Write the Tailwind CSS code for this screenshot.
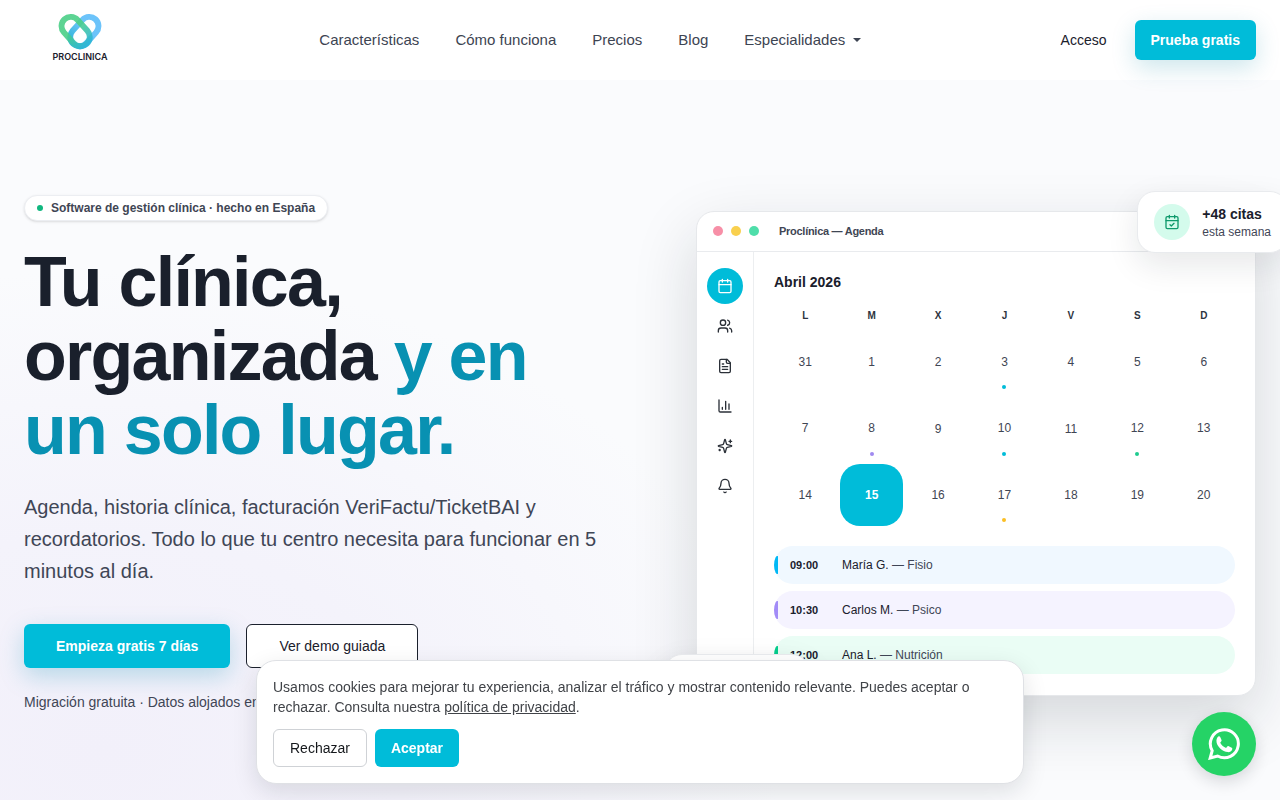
<!DOCTYPE html>
<html lang="es">

<head>
    <meta charset="UTF-8">
    <meta name="viewport" content="width=device-width, initial-scale=1.0">
    <title>Proclínica - Software de gestión clínica</title>
    <script src="https://cdn.jsdelivr.net/npm/@tailwindcss/browser@4"></script>
</head>

<body class="min-h-screen overflow-x-hidden bg-[#fafbfd] font-['Liberation_Sans',Arial,sans-serif] text-[#1a202c]">

    <!-- header -->
    <header class="relative z-10 bg-white">
        <div class="max-w-7xl mx-auto h-20 px-6 flex items-center justify-between">
            <a href="#" class="w-28 pb-1 flex flex-col items-center gap-0.5">
                <svg class="w-[46px] h-9" viewBox="1 3 46 37" fill="none" stroke-width="6">
                    <defs>
                        <linearGradient id="green" x1="0" y1="0" x2="1" y2="0">
                            <stop offset="0.4" stop-color="#4bcf87" />
                            <stop offset="1" stop-color="#2fb6d6" />
                        </linearGradient>
                        <linearGradient id="blue" x1="0" y1="0" x2="1" y2="0">
                            <stop offset="0.4" stop-color="#6cc3fa" />
                            <stop offset="1" stop-color="#2fb6d6" />
                        </linearGradient>
                    </defs>
                    <rect x="-9.5" y="-9.5" width="34" height="19" rx="9.5" stroke="url(#blue)" transform="translate(33.5 15.5) rotate(132)" />
                    <rect x="-9.5" y="-9.5" width="34" height="19" rx="9.5" stroke="url(#green)" stroke-opacity="0.9" transform="translate(14.5 15.5) rotate(48)" />
                </svg>
                <span class="font-['Inter',sans-serif] text-[9px] leading-[10px] font-semibold">PROCLINICA</span>
            </a>

            <nav class="flex items-center gap-9 text-[15px] text-[#3d4452]">
                <a href="#caracteristicas">Características</a>
                <a href="#como-funciona">Cómo funciona</a>
                <a href="#precios">Precios</a>
                <a href="#blog">Blog</a>
                <button class="flex items-center gap-2">Especialidades
                    <svg class="w-2 h-1" viewBox="0 0 8 4" fill="currentColor"><path d="M0 0h8L4 4z" /></svg>
                </button>
            </nav>

            <div class="flex items-center gap-3">
                <a href="#acceso" class="px-4 text-sm">Acceso</a>
                <a href="#prueba"
                    class="h-10 px-4 flex items-center rounded-md bg-[#00bcd9] text-white text-sm font-bold shadow-[0_8px_24px_rgba(0,130,160,0.2)]">Prueba gratis</a>
            </div>
        </div>
    </header>

    <!-- hero -->
    <main class="min-h-[720px] overflow-hidden bg-[radial-gradient(680px_480px_at_8%_92%,#f2f0fa_0%,#f4f3fb_45%,#fafbfd_100%)]">
        <div class="max-w-7xl mx-auto px-6 pt-[115px] pb-24 grid grid-cols-2 gap-16 items-center">

            <div>
                <p class="inline-flex items-center gap-2 h-[26px] px-3 rounded-full border border-[#eceef2] bg-white text-xs font-bold text-[#3f4654] shadow-sm align-top">
                    <span class="w-1.5 h-1.5 rounded-full bg-[#10b77f]"></span>Software de gestión clínica · hecho en España
                </p>
                <h1 class="mt-6 text-[70px] leading-[74px] font-bold tracking-tight whitespace-nowrap">
                    Tu clínica,<br>organizada <span class="text-[#0891b2]">y en<br>un solo lugar.</span>
                </h1>
                <p class="mt-6 text-xl leading-[32px] text-[#3f4656]">
                    Agenda, historia clínica, facturación VeriFactu/TicketBAI y recordatorios. Todo lo que tu centro
                    necesita para funcionar en 5 minutos al día.
                </p>
                <div class="mt-[37px] flex gap-4">
                    <a href="#prueba"
                        class="h-11 px-8 flex items-center rounded-md bg-[#00bcd9] text-white text-sm font-bold shadow-[0_8px_24px_rgba(0,140,180,0.25)]">Empieza gratis 7 días</a>
                    <a href="#demo"
                        class="h-11 px-8 flex items-center rounded-md border border-[#1a202c] bg-white text-sm">Ver demo guiada</a>
                </div>
                <p class="mt-6 text-sm text-[#3f4656]">Migración gratuita · Datos alojados en</p>
            </div>

            <!-- agenda -->
            <div class="relative w-full max-w-[560px] ml-auto">
                <div class="rounded-[18px] border border-[#e6e8eb] bg-white shadow-[0_24px_64px_rgba(20,28,36,0.16)]">
                    <div class="h-10 px-4 flex items-center gap-2 border-b border-[#e9ebee]">
                        <span class="w-2.5 h-2.5 rounded-full bg-[#f78fa7]"></span>
                        <span class="w-2.5 h-2.5 rounded-full bg-[#f9d04e]"></span>
                        <span class="w-2.5 h-2.5 rounded-full bg-[#4fdeaa]"></span>
                        <span class="ml-3 text-[11px] leading-4 font-bold tracking-tight text-[#3f4654]">Proclínica — Agenda</span>
                    </div>

                    <div class="flex">
                        <div class="w-[57px] py-4 flex flex-col items-center gap-1 border-r border-[#eceef0] text-[#2b3038]">
                            <button class="w-9 h-9 rounded-full bg-[#00bcd9] text-white flex items-center justify-center" aria-label="Agenda">
                                <svg class="w-4 h-4" viewBox="0 0 24 24" fill="none" stroke="currentColor" stroke-width="2" stroke-linecap="round" stroke-linejoin="round"><path d="M8 2v4M16 2v4M3 10h18" /><rect x="3" y="4" width="18" height="18" rx="2" /></svg>
                            </button>
                            <button class="w-9 h-9 flex items-center justify-center" aria-label="Pacientes">
                                <svg class="w-4 h-4" viewBox="0 0 24 24" fill="none" stroke="currentColor" stroke-width="2" stroke-linecap="round" stroke-linejoin="round"><path d="M16 21v-2a4 4 0 0 0-4-4H6a4 4 0 0 0-4 4v2" /><circle cx="9" cy="7" r="4" /><path d="M22 21v-2a4 4 0 0 0-3-3.87M16 3.13a4 4 0 0 1 0 7.75" /></svg>
                            </button>
                            <button class="w-9 h-9 flex items-center justify-center" aria-label="Historias">
                                <svg class="w-4 h-4" viewBox="0 0 24 24" fill="none" stroke="currentColor" stroke-width="2" stroke-linecap="round" stroke-linejoin="round"><path d="M15 2H6a2 2 0 0 0-2 2v16a2 2 0 0 0 2 2h12a2 2 0 0 0 2-2V7z" /><path d="M14 2v4a2 2 0 0 0 2 2h4M10 9H8M16 13H8M16 17H8" /></svg>
                            </button>
                            <button class="w-9 h-9 flex items-center justify-center" aria-label="Informes">
                                <svg class="w-4 h-4" viewBox="0 0 24 24" fill="none" stroke="currentColor" stroke-width="2" stroke-linecap="round" stroke-linejoin="round"><path d="M3 3v16a2 2 0 0 0 2 2h16M18 17V9M13 17V5M8 17v-3" /></svg>
                            </button>
                            <button class="w-9 h-9 flex items-center justify-center" aria-label="Asistente">
                                <svg class="w-4 h-4" viewBox="0 0 24 24" fill="none" stroke="currentColor" stroke-width="2" stroke-linecap="round" stroke-linejoin="round"><path d="M9.937 15.5A2 2 0 0 0 8.5 14.063l-6.135-1.582a.5.5 0 0 1 0-.962L8.5 9.936A2 2 0 0 0 9.937 8.5l1.582-6.135a.5.5 0 0 1 .963 0L14.063 8.5A2 2 0 0 0 15.5 9.937l6.135 1.581a.5.5 0 0 1 0 .964L15.5 14.063a2 2 0 0 0-1.437 1.437l-1.582 6.135a.5.5 0 0 1-.963 0z" /><path d="M20 3v4M22 5h-4M4 17v2M5 18H3" /></svg>
                            </button>
                            <button class="w-9 h-9 flex items-center justify-center" aria-label="Avisos">
                                <svg class="w-4 h-4" viewBox="0 0 24 24" fill="none" stroke="currentColor" stroke-width="2" stroke-linecap="round" stroke-linejoin="round"><path d="M10.268 21a2 2 0 0 0 3.464 0M3.262 15.326A1 1 0 0 0 4 17h16a1 1 0 0 0 .74-1.673C19.41 13.956 18 12.499 18 8A6 6 0 0 0 6 8c0 4.499-1.411 5.956-2.738 7.326" /></svg>
                            </button>
                        </div>

                        <div class="flex-1 p-5 pb-[21px]">
                            <h2 class="text-sm font-bold">Abril 2026</h2>
                            <div class="mt-4 grid grid-cols-7 gap-1 text-center text-[10px] leading-[15px] font-bold text-[#2d3440]">
                                <span>L</span><span>M</span><span>X</span><span>J</span><span>V</span><span>S</span><span>D</span>
                            </div>
                            <div class="mt-2 grid grid-cols-7 gap-1 text-xs text-[#3f4654] *:relative *:aspect-square *:flex *:items-center *:justify-center">
                                <div>31</div>
                                <div>1</div>
                                <div>2</div>
                                <div>3<span class="absolute bottom-1 w-1 h-1 rounded-full bg-[#00bcd9]"></span></div>
                                <div>4</div>
                                <div>5</div>
                                <div>6</div>
                                <div>7</div>
                                <div>8<span class="absolute bottom-1 w-1 h-1 rounded-full bg-[#a08af0]"></span></div>
                                <div>9</div>
                                <div>10<span class="absolute bottom-1 w-1 h-1 rounded-full bg-[#00bcd9]"></span></div>
                                <div>11</div>
                                <div>12<span class="absolute bottom-1 w-1 h-1 rounded-full bg-[#1fcb8f]"></span></div>
                                <div>13</div>
                                <div>14</div>
                                <div class="rounded-[20px] bg-[#00bcd9] text-white font-bold">15</div>
                                <div>16</div>
                                <div>17<span class="absolute bottom-1 w-1 h-1 rounded-full bg-[#fbbf24]"></span></div>
                                <div>18</div>
                                <div>19</div>
                                <div>20</div>
                            </div>

                            <div class="mt-5 flex flex-col gap-[7px] text-xs">
                                <div class="relative overflow-hidden h-[38px] px-4 flex items-center gap-3 rounded-full bg-[#f0f8ff]">
                                    <span class="absolute left-0 inset-y-2.5 w-1 rounded-l-full bg-[#00b8f5]"></span>
                                    <span class="w-10 text-[11px] font-bold">09:00</span>
                                    <p>María G. <span class="text-[#3f4656]">— Fisio</span></p>
                                </div>
                                <div class="relative overflow-hidden h-[38px] px-4 flex items-center gap-3 rounded-full bg-[#f5f3ff]">
                                    <span class="absolute left-0 inset-y-2.5 w-1 rounded-l-full bg-[#a28bf7]"></span>
                                    <span class="w-10 text-[11px] font-bold">10:30</span>
                                    <p>Carlos M. <span class="text-[#3f4656]">— Psico</span></p>
                                </div>
                                <div class="relative overflow-hidden h-[38px] px-4 flex items-center gap-3 rounded-full bg-[#eafdf5]">
                                    <span class="absolute left-0 inset-y-2.5 w-1 rounded-l-full bg-[#06cf8e]"></span>
                                    <span class="w-10 text-[11px] font-bold">12:00</span>
                                    <p>Ana L. <span class="text-[#3f4656]">— Nutrición</span></p>
                                </div>
                            </div>
                        </div>
                    </div>
                </div>

                <!-- tarjetas flotantes -->
                <div class="absolute -top-5 -right-8 px-4 py-3 flex items-center gap-3 rounded-[18px] border border-[#e9ebee] bg-white whitespace-nowrap shadow-[0_12px_32px_rgba(20,28,36,0.1)]">
                    <span class="w-9 h-9 rounded-full bg-[#d4fbec] text-[#0f9a6c] flex items-center justify-center">
                        <svg class="w-4 h-4" viewBox="0 0 24 24" fill="none" stroke="currentColor" stroke-width="2" stroke-linecap="round" stroke-linejoin="round"><path d="M8 2v4M16 2v4M3 10h18M9 16l2 2 4-4" /><rect x="3" y="4" width="18" height="18" rx="2" /></svg>
                    </span>
                    <div>
                        <p class="text-sm leading-5 font-bold">+48 citas</p>
                        <p class="text-xs leading-4 text-[#3f4656]">esta semana</p>
                    </div>
                </div>
                <div class="absolute -bottom-5 -left-8 w-[146px] h-[62px] rounded-[18px] border border-[#e9ebee] bg-white shadow-[0_12px_32px_rgba(20,28,36,0.1)]"></div>
            </div>
        </div>
    </main>

    <!-- cookies -->
    <div class="fixed z-20 bottom-4 inset-x-4 max-w-3xl mx-auto p-4 rounded-[20px] border border-[#dfe1e5] bg-white text-sm shadow-[0_8px_24px_rgba(20,28,36,0.12)]">
        <p class="text-[#404348]">
            Usamos cookies para mejorar tu experiencia, analizar el tráfico y mostrar contenido relevante. Puedes
            aceptar o rechazar. Consulta nuestra <a href="#privacidad" class="underline">política de privacidad</a>.
        </p>
        <div class="mt-3 flex gap-2">
            <button class="h-[38px] px-4 rounded-md border border-[#cfd2d6] bg-white text-[#15181c]">Rechazar</button>
            <button class="h-[38px] px-4 rounded-md bg-[#00bcd9] text-white font-bold">Aceptar</button>
        </div>
    </div>

    <!-- whatsapp -->
    <a href="#whatsapp" aria-label="WhatsApp"
        class="fixed z-20 bottom-6 right-6 w-16 h-16 rounded-full bg-[#25d366] flex items-center justify-center shadow-[0_6px_16px_rgba(20,28,36,0.15)]">
        <svg class="w-8 h-8" viewBox="0 0 32 32" fill="none">
            <path d="M2.2 30l2-7.3A14 14 0 1 1 9.6 28z" stroke="#fff" stroke-width="3" />
            <path d="M10.3 8.600c.7-.4 1.500-.3 1.900.5l1.300 3c.3.7 0 1.200-1.300 2.700 1.400 2.600 3.300 4.200 5.900 5.200 1.400-1.700 1.800-2.200 2.600-1.800l3 1.500c.7.4.7 1 .4 2-.6 1.800-2.600 2.600-4.300 2.400-5.600-.8-10.200-5.200-11.200-9.700-.5-2.300.2-4.700 1.700-5.800z" fill="#fff" />
        </svg>
    </a>

</body>

</html>
